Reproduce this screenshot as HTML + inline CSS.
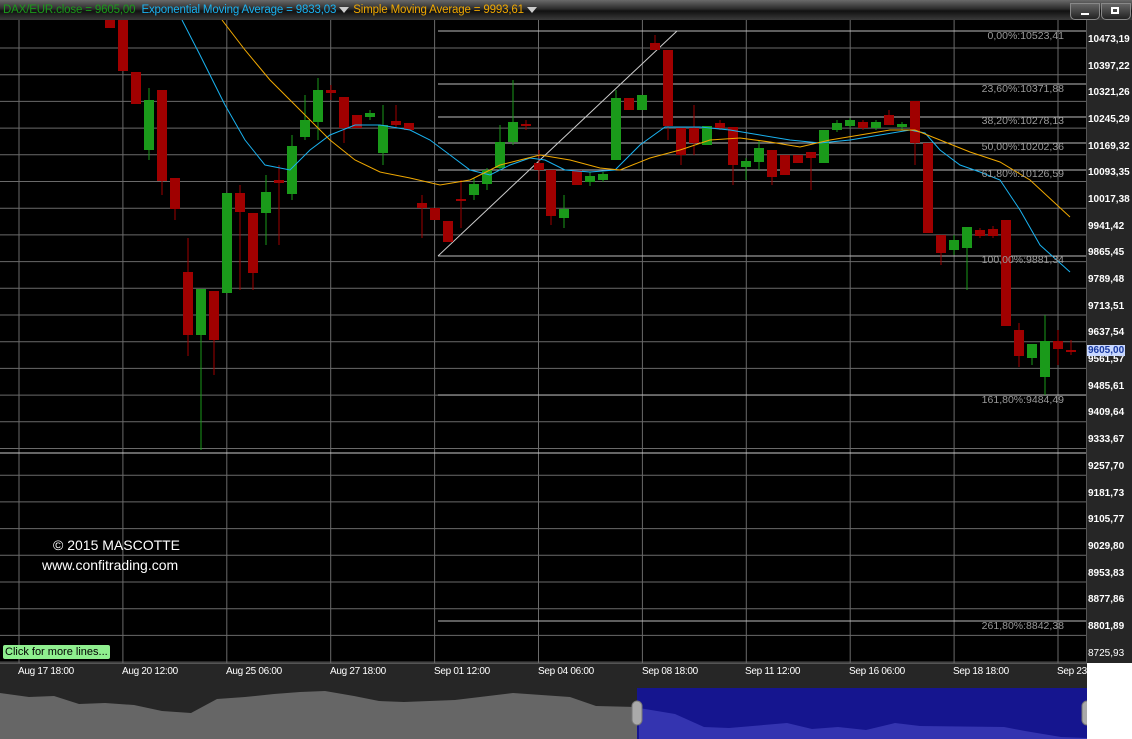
<!DOCTYPE html>
<html><head><meta charset="utf-8"><style>
*{margin:0;padding:0}
body{width:1132px;height:739px;overflow:hidden;background:#000;position:relative;font-family:"Liberation Sans",sans-serif}
#top{position:absolute;left:0;top:0;width:1132px;height:20px;background:linear-gradient(#6a6a6a,#2a2a2a 45%,#111 55%,#3a3a3a);font-size:11.5px;line-height:20px;white-space:nowrap;letter-spacing:-0.15px}
#top span{margin-left:3px}
.tri{display:inline-block;width:0;height:0;border-left:5px solid transparent;border-right:5px solid transparent;border-top:6px solid #ccc;margin:0 4px 0 3px;vertical-align:middle}
.btn{position:absolute;top:3px;height:15px;width:28px;border:1px solid #888;border-radius:0 0 5px 5px;background:linear-gradient(#666,#222)}
#axis{position:absolute;left:1086px;top:20px;width:46px;height:643px;background:#262626;border-left:1px solid #555}
.al{position:absolute;left:1088px;color:#fff;font-size:10px;font-weight:bold}
#xaxis{position:absolute;left:0;top:663px;width:1087px;height:26px;background:#262626;border-top:1px solid #555}
.xl{position:absolute;top:666px;color:#fff;font-size:10px;letter-spacing:-0.3px}
.fl{position:absolute;color:#999;font-size:10.5px;text-align:right;width:150px}
</style></head><body>
<div id="top"><span style="color:#1a9a1a">DAX/EUR.close = 9605,00</span> <span style="color:#1ab2f0">Exponential Moving Average = 9833,03</span><i class="tri"></i><span style="color:#f0a800;margin-left:0">Simple Moving Average = 9993,61</span><i class="tri"></i>
<div class="btn" style="left:1070px"><div style="position:absolute;left:10px;top:9px;width:8px;height:2px;background:#fff"></div></div>
<div class="btn" style="left:1101px"><div style="position:absolute;left:9px;top:3px;width:8px;height:7px;border:2px solid #fff;box-sizing:border-box"></div></div>
</div>
<svg id="c" width="1086" height="643" style="position:absolute;left:0;top:20px" viewBox="0 20 1086 643"></svg>
<div id="axis"></div>
<div class="al" style="top:34px">10473,19</div><div class="al" style="top:61px">10397,22</div><div class="al" style="top:87px">10321,26</div><div class="al" style="top:114px">10245,29</div><div class="al" style="top:141px">10169,32</div><div class="al" style="top:167px">10093,35</div><div class="al" style="top:194px">10017,38</div><div class="al" style="top:221px">9941,42</div><div class="al" style="top:247px">9865,45</div><div class="al" style="top:274px">9789,48</div><div class="al" style="top:301px">9713,51</div><div class="al" style="top:327px">9637,54</div><div class="al" style="top:354px">9561,57</div><div class="al" style="top:381px">9485,61</div><div class="al" style="top:407px">9409,64</div><div class="al" style="top:434px">9333,67</div><div class="al" style="top:461px">9257,70</div><div class="al" style="top:488px">9181,73</div><div class="al" style="top:514px">9105,77</div><div class="al" style="top:541px">9029,80</div><div class="al" style="top:568px">8953,83</div><div class="al" style="top:594px">8877,86</div><div class="al" style="top:621px">8801,89</div><div class="al" style="top:648px;font-weight:normal">8725,93</div>
<div class="al" style="top:345px;left:1087px;background:#c8d8ff;color:#1a3aa0;padding:0 1px">9605,00</div>
<div class="fl" style="left:914px;top:30px">0,00%:10523,41</div>
<div class="fl" style="left:914px;top:83px">23,60%:10371,88</div>
<div class="fl" style="left:914px;top:115px">38,20%:10278,13</div>
<div class="fl" style="left:914px;top:141px">50,00%:10202,36</div>
<div class="fl" style="left:914px;top:168px">61,80%:10126,59</div>
<div class="fl" style="left:914px;top:254px">100,00%:9881,34</div>
<div class="fl" style="left:914px;top:394px">161,80%:9484,49</div>
<div class="fl" style="left:914px;top:620px">261,80%:8842,38</div>
<div style="position:absolute;left:53px;top:537px;color:#fff;font-size:14px">© 2015 MASCOTTE</div>
<div style="position:absolute;left:42px;top:557px;color:#fff;font-size:14px">www.confitrading.com</div>
<div style="position:absolute;left:3px;top:645px;background:#8fef8f;color:#000;font-size:11px;padding:1px 2px;border-radius:2px">Click for more lines...</div>
<div id="xaxis"></div>
<div class="xl" style="left:18px">Aug 17 18:00</div><div class="xl" style="left:122px">Aug 20 12:00</div><div class="xl" style="left:226px">Aug 25 06:00</div><div class="xl" style="left:330px">Aug 27 18:00</div><div class="xl" style="left:434px">Sep 01 12:00</div><div class="xl" style="left:538px">Sep 04 06:00</div><div class="xl" style="left:642px">Sep 08 18:00</div><div class="xl" style="left:745px">Sep 11 12:00</div><div class="xl" style="left:849px">Sep 16 06:00</div><div class="xl" style="left:953px">Sep 18 18:00</div><div class="xl" style="left:1057px">Sep 23</div>
<div style="position:absolute;left:1087px;top:663px;width:45px;height:76px;background:#fff"></div>
<svg width="1087" height="51" style="position:absolute;left:0;top:688px">
<rect width="1087" height="51" fill="#262626"/>
<polygon fill="#666" points="0,5 29,9 54,8 79,16 105,15 134,17 162,23 191,25 217,11 245,9 274,6 300,4 325,3 354,8 379,13 404,14 455,12 513,5 570,9 596,18 637,19 637,51 0,51"/>
<rect x="637" y="0" width="450" height="51" fill="#15158f"/>
<polygon fill="#3434b0" points="639,20 675,26 704,39 729,40 787,35 812,41 838,39 866,42 895,35 920,38 1004,39 1025,43 1061,49 1087,50 1087,51 639,51"/>
<rect x="632" y="13" width="10" height="24" rx="5" fill="#aaa" stroke="#777"/>
<rect x="1082" y="13" width="10" height="24" rx="5" fill="#aaa" stroke="#777"/>
</svg>
<script>
var s='',i;
for(i=0;i<24;i++){var y=48+i*26.7;s+='<line x1="0" x2="1086" y1="'+y+'" y2="'+y+'" stroke="#6a6a6a"/>';}
for(i=0;i<11;i++){var x=19+i*103.9;s+='<line y1="20" y2="663" x1="'+x+'" x2="'+x+'" stroke="#6a6a6a"/>';}
[31,84,117,143,170,256,395,621].forEach(function(y){s+='<line x1="438" x2="1086" y1="'+y+'" y2="'+y+'" stroke="#bbb"/>';});
s+='<line x1="0" x2="1086" y1="453" y2="453" stroke="#ccc"/>';
s+='<line x1="438" y1="256" x2="677" y2="31" stroke="#ccc"/>';
var C=[[110,20,28,20,28,0],[123,20,71,20,71,0],[136,72,104,72,104,0],[149,100,150,88,160,1],[162,90,181,90,195,0],[175,178,209,178,220,0],[188,272,335,238,356,0],[201,289,335,289,450,1],[214,291,340,291,375,0],[227,193,293,193,293,1],[240,193,212,185,290,0],[253,213,273,213,290,0],[266,192,213,175,245,1],[279,180,183,165,245,0],[292,146,194,135,200,1],[305,120,137,95,140,1],[318,90,122,78,140,1],[331,90,93,85,100,0],[344,97,128,97,143,0],[357,115,128,115,128,0],[370,113,117,110,120,1],[383,125,153,105,165,1],[396,121,125,105,128,0],[409,123,130,123,130,0],[422,203,208,195,238,0],[435,208,220,208,220,0],[448,221,242,221,242,0],[461,199,201,180,228,0],[474,184,195,178,200,1],[487,170,184,168,190,1],[500,142,168,125,170,1],[513,122,142,80,145,1],[526,124,126,120,130,0],[539,163,170,150,180,0],[551,170,216,170,225,0],[564,209,218,195,228,1],[577,170,185,170,185,0],[590,176,182,172,186,1],[603,174,180,172,182,1],[616,98,160,90,160,1],[629,98,110,98,110,0],[642,95,110,95,110,1],[655,43,50,35,50,0],[668,50,126,50,140,0],[681,128,155,128,165,0],[694,128,143,105,155,0],[707,126,145,126,145,1],[720,123,128,120,130,0],[733,127,165,127,185,0],[746,161,167,158,180,1],[759,148,162,140,170,1],[772,150,177,150,185,0],[785,155,175,155,175,0],[798,155,163,155,163,0],[811,152,158,152,190,0],[824,130,163,130,163,1],[837,123,130,120,132,1],[850,120,126,118,128,1],[863,122,128,120,130,0],[876,122,128,120,130,1],[889,115,125,110,125,0],[902,124,127,122,130,1],[915,101,143,101,165,0],[928,143,233,143,233,0],[941,235,253,235,265,0],[954,240,250,235,255,1],[967,227,248,227,290,1],[980,230,236,228,238,0],[993,229,236,226,238,0],[1006,220,326,220,326,0],[1019,330,356,323,367,0],[1032,344,358,344,365,1],[1045,341,377,315,395,1],[1058,341,349,330,365,0],[1071,350,352,340,355,0]];
C.forEach(function(c){var col=c[5]?'#1a9a1a':'#a00000';s+='<line x1="'+c[0]+'" x2="'+c[0]+'" y1="'+c[3]+'" y2="'+c[4]+'" stroke="'+col+'"/><rect x="'+(c[0]-5)+'" y="'+c[1]+'" width="10" height="'+Math.max(2,c[2]-c[1])+'" fill="'+col+'"/>';});
s+='<polyline fill="none" stroke="#1ab2f0" points="182,20 200,55 225,105 245,140 265,165 290,170 310,150 330,135 355,125 380,125 410,130 430,140 450,155 470,170 490,175 510,165 530,158 545,160 565,170 590,172 615,170 640,145 665,127 700,127 730,130 760,135 790,140 820,143 850,140 880,135 910,130 925,133 940,150 960,165 980,172 1000,180 1020,210 1040,245 1070,272"/>';
s+='<polyline fill="none" stroke="#f0a800" points="222,20 245,50 270,80 300,110 330,140 355,160 380,172 410,178 440,185 470,180 500,165 520,160 540,155 570,160 600,168 620,170 650,158 680,150 710,140 740,138 770,142 800,147 830,140 860,135 890,130 915,130 940,140 970,152 1000,162 1030,180 1070,217"/>';
document.getElementById('c').innerHTML=s;
</script>
</body></html>
